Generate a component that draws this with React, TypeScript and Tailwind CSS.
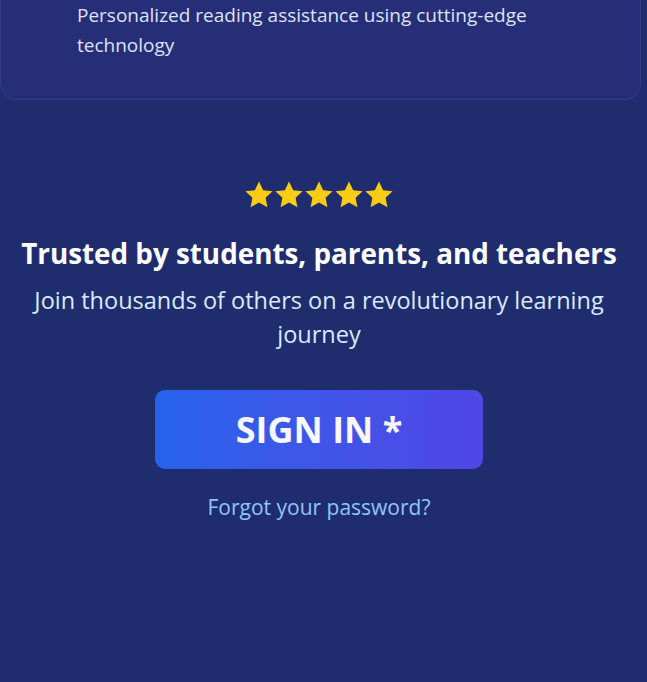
import React from "react";

function Star() {
  return (
    <svg width="30" height="30" viewBox="1.5 1.5 21 21" fill="#facc15">
      <path d="M12 2.5l2.9 6.1 6.6.8-4.9 4.6 1.3 6.6L12 17.3l-5.9 3.3 1.3-6.6-4.9-4.6 6.6-.8z" />
    </svg>
  );
}

export default function App() {
  return (
    <div
      className="w-[647px] h-[682px] bg-[#1f2d6f] overflow-hidden flex flex-col"
      style={{ fontFamily: '"Open Sans", "Noto Sans", sans-serif' }}
    >
      <div className="mr-[6px] rounded-b-2xl border border-t-0 border-[#303a8a] bg-[#262e78] pl-[76px] pr-6 pb-[39px]">
        <p className="w-[480px] text-[19px] leading-[30px] text-[#dfe3fb]">
          Personalized reading assistance using cutting-edge technology
        </p>
      </div>
      <div className="w-[638px] flex flex-col items-center mt-[80px]">
        <div className="flex gap-0 h-[30px] items-center">
          <Star />
          <Star />
          <Star />
          <Star />
          <Star />
        </div>
        <h2 className="mt-[25px] text-[27.8px] leading-[36px] font-bold text-white">
          Trusted by students, parents, and teachers
        </h2>
        <p className="mt-[12px] w-[600px] text-center text-[23.5px] leading-[34px] text-[#dbeafe]">
          Join thousands of others on a revolutionary learning journey
        </p>
        <button className="mt-[39px] w-[328px] h-[79px] rounded-[10px] bg-gradient-to-r from-[#2563eb] to-[#4f46e5] text-[36px] font-bold text-[#f8f7ff]">
          SIGN IN *
        </button>
        <a className="mt-[25px] text-[21px] leading-[26px] text-[#93c5fd]">
          Forgot your password?
        </a>
      </div>
    </div>
  );
}
